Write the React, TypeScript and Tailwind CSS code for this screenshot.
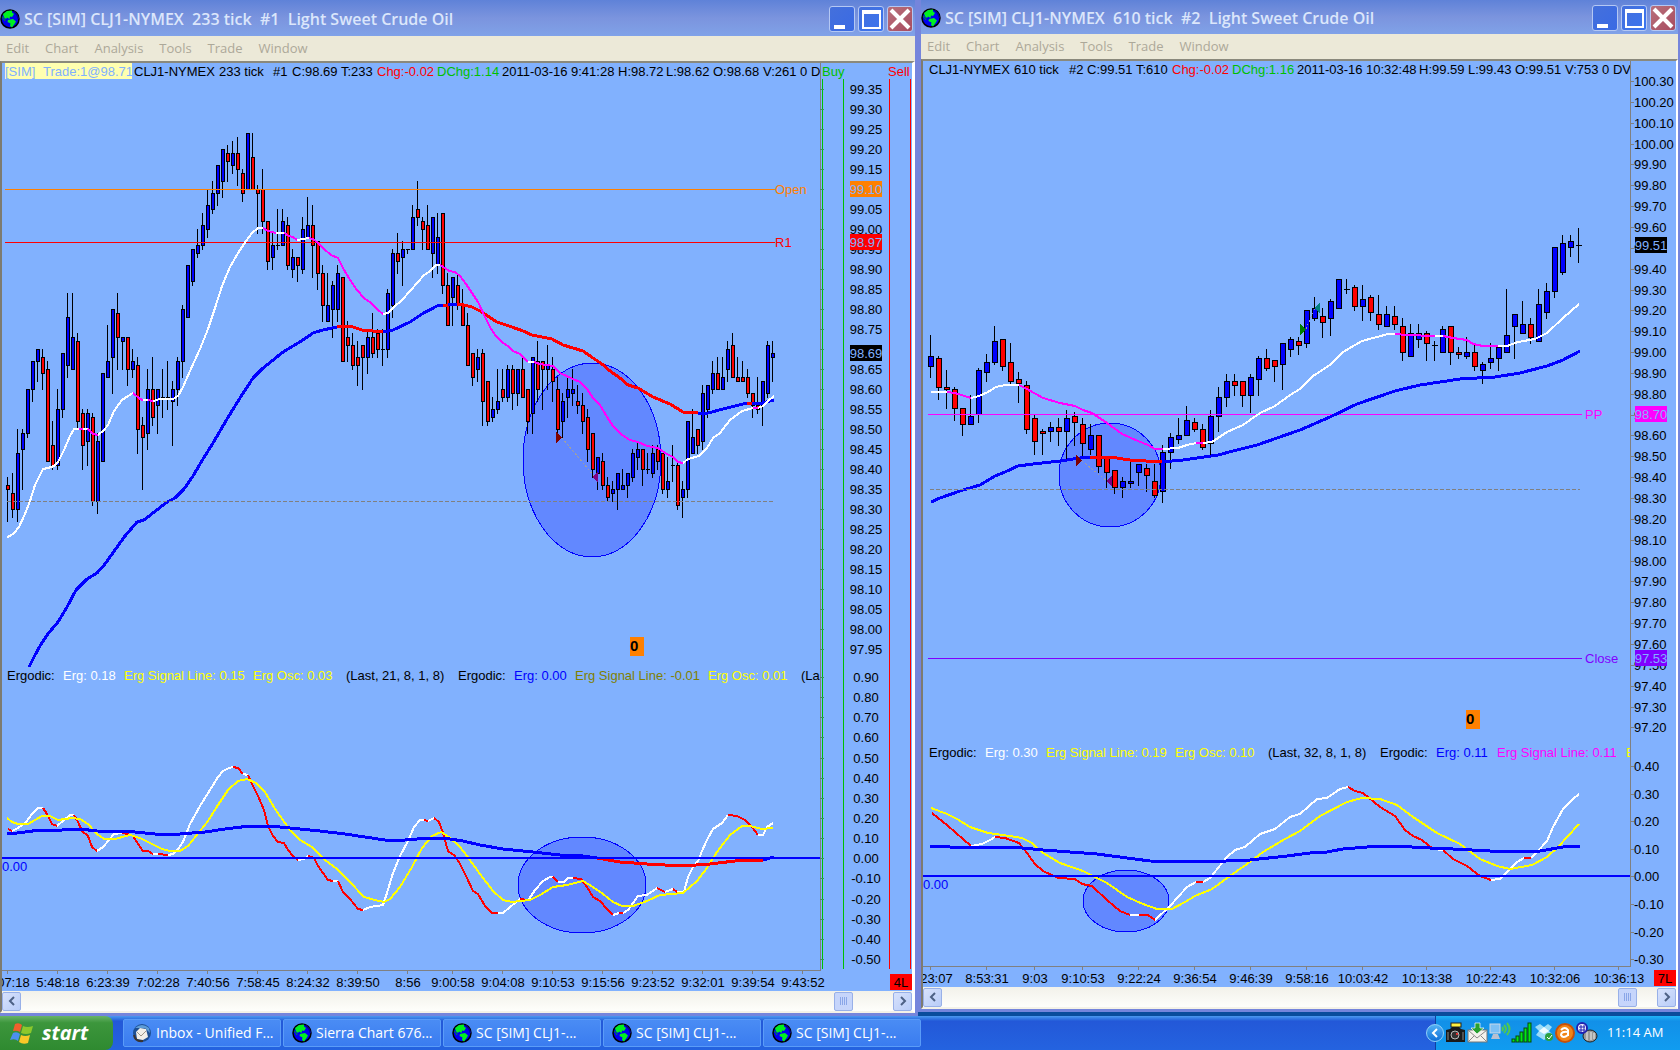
import React from 'react';

type Candle = [number, number, number, number]; // high, open, close, low (ticks above 98.00)
type Segment = [string, string]; // colour, points
type Label = [number, string, string]; // x, text, colour

interface Tag {
  y: number;
  text: string;
  color: string;
}

interface Marker {
  points: string;
  color: string;
}

interface ChartConfig {
  view: { x: number; y: number; w: number; h: number };
  plotRight: number;
  plotBottom: number;
  candleX: number;
  candleStep: number;
  bodyWidth: number;
  baseY: number;
  tickHeight: number;
  candles: Candle[];
  header: Label[];
  headerY: number;
  legend: Label[];
  legendY: number;
  levels: { y: number; color: string; label: string }[];
  tags: Tag[];
  scale: [number, string][];
  scaleX: number;
  times: [number, string][];
  dashY: number;
  dashEnd: number;
  zeroY: number;
  ellipses: [number, number, number, number][];
  averages: Segment[][];
  oscillators: Segment[][];
  zeroBox: [number, number];
  markers: Marker[];
  tradeLines: string[];
  position: [number, string];
  ladder?: boolean;
}

const BG = '#81b1fe';
const W = '#ffffff';
const M = '#ff00ff';
const B = '#0000ff';
const R = '#ff0000';
const Y = '#ffff00';
const G = '#00c000';
const K = '#000000';

const range = (from: number, to: number, step: number, y0: number, dy: number): [number, string][] => {
  const count = Math.round((from - to) / step) + 1;
  return Array.from({ length: count }, (_, i) => [Math.round(y0 + i * dy), (from - i * step).toFixed(2)]);
};

const leftCandles: Candle[] = [
  [38, 36, 35, 27], [39, 34, 30, 28], [50, 30, 44, 27], [50, 45, 49, 35], [60, 49, 60, 48], [67, 60, 67, 57],
  [70, 67, 70, 62], [70, 68, 64, 60], [67, 65, 42, 42], [52, 46, 41, 40], [60, 41, 55, 40], [69, 55, 69, 53],
  [84, 66, 78, 63], [84, 65, 73, 65], [74, 72, 52, 50], [55, 54, 46, 40], [55, 47, 54, 41], [54, 53, 32, 31],
  [49, 32, 47, 29], [64, 42, 64, 42], [76, 63, 67, 63], [80, 68, 80, 59], [84, 79, 73, 65], [73, 72, 73, 65],
  [73, 73, 65, 61], [70, 65, 67, 63], [68, 66, 50, 44], [53, 51, 48, 35], [65, 49, 60, 45], [68, 60, 53, 51],
  [60, 56, 60, 49], [65, 58, 58, 53], [67, 58, 58, 55], [62, 57, 60, 46], [68, 60, 67, 56], [81, 67, 80, 63],
  [91, 78, 91, 78], [95, 87, 95, 86], [100, 94, 96, 93], [104, 96, 101, 95], [110, 100, 106, 98], [112, 105, 109, 104],
  [116, 109, 116, 106], [120, 112, 120, 108], [121, 119, 117, 112], [122, 116, 119, 114], [123, 119, 115, 111], [115, 114, 109, 107],
  [124, 110, 124, 110], [124, 118, 110, 110], [111, 110, 109, 99], [115, 110, 102, 99], [102, 102, 92, 90], [99, 93, 96, 90],
  [105, 96, 96, 95], [105, 96, 102, 96], [103, 101, 91, 90], [95, 90, 93, 88], [93, 93, 91, 87], [103, 90, 100, 89],
  [108, 98, 101, 98], [106, 101, 96, 88], [97, 97, 89, 85], [91, 89, 81, 77], [89, 77, 81, 77], [87, 80, 86, 73],
  [91, 80, 89, 77], [88, 88, 67, 67], [77, 73, 71, 67], [74, 71, 66, 65], [72, 68, 66, 61], [71, 71, 68, 60],
  [75, 68, 73, 64], [79, 73, 69, 68], [75, 74, 70, 68], [75, 70, 70, 66], [85, 70, 84, 68], [95, 81, 94, 78],
  [99, 94, 92, 89], [97, 93, 95, 86], [95, 95, 95, 94], [106, 95, 103, 95], [112, 105, 103, 101], [103, 102, 100, 95],
  [106, 101, 95, 95], [103, 94, 103, 88], [104, 91, 98, 89], [104, 104, 86, 84], [89, 86, 76, 76], [88, 83, 88, 76],
  [89, 86, 81, 80], [85, 81, 76, 76], [79, 76, 66, 66], [69, 69, 63, 61], [70, 65, 68, 62], [70, 69, 57, 51],
  [62, 62, 52, 51], [58, 53, 55, 52], [65, 55, 57, 54], [65, 60, 58, 57], [66, 58, 65, 57], [66, 65, 59, 55],
  [65, 59, 65, 56], [68, 65, 58, 58], [60, 60, 52, 49], [68, 54, 68, 49], [72, 67, 60, 57], [67, 67, 65, 55],
  [71, 65, 66, 60], [68, 65, 62, 57], [63, 60, 50, 49], [59, 52, 57, 48], [63, 58, 60, 53], [65, 59, 60, 56],
  [61, 57, 56, 54], [59, 56, 52, 49], [55, 53, 45, 42], [49, 49, 40, 38], [43, 39, 43, 35], [44, 42, 36, 35],
  [38, 36, 33, 32], [37, 34, 35, 32], [39, 35, 39, 30], [40, 35, 36, 35], [39, 36, 39, 33], [45, 38, 44, 37],
  [47, 43, 45, 40], [45, 45, 40, 36], [44, 40, 40, 39], [46, 39, 44, 38], [46, 45, 42, 40], [44, 44, 35, 34],
  [43, 35, 37, 33], [46, 41, 41, 37], [42, 41, 31, 30], [37, 33, 35, 28], [52, 35, 52, 33], [55, 44, 48, 44],
  [50, 50, 46, 44], [61, 47, 59, 45], [61, 55, 61, 53], [67, 60, 64, 59], [68, 64, 60, 60], [68, 60, 63, 60],
  [72, 65, 70, 62], [74, 71, 63, 63], [68, 63, 62, 62], [67, 63, 62, 62], [65, 63, 59, 58], [59, 59, 56, 53],
  [63, 56, 55, 54], [62, 56, 62, 51], [72, 59, 71, 58], [72, 68, 69, 62],
];

const rightCandles: Candle[] = [
  [108, 93, 98, 88], [98, 97, 83, 77], [91, 83, 82, 73], [83, 82, 73, 67], [73, 73, 65, 60], [79, 65, 69, 65],
  [92, 70, 91, 66], [99, 90, 95, 86], [112, 95, 105, 94], [106, 106, 93, 91], [104, 95, 86, 85], [90, 87, 85, 76],
  [86, 84, 63, 61], [70, 68, 57, 51], [63, 62, 61, 51], [66, 62, 64, 57], [68, 64, 62, 55], [72, 62, 68, 49],
  [71, 69, 66, 55], [68, 65, 56, 50], [65, 53, 60, 51], [60, 60, 45, 42], [50, 49, 42, 35], [43, 43, 35, 32],
  [40, 35, 38, 30], [47, 37, 38, 35], [46, 42, 46, 36], [46, 44, 41, 33], [46, 38, 31, 30], [55, 33, 52, 28],
  [61, 52, 59, 44], [68, 58, 60, 56], [74, 60, 67, 60], [68, 66, 63, 62], [65, 63, 54, 53], [72, 56, 69, 51],
  [83, 69, 78, 62], [89, 78, 86, 74], [89, 86, 84, 79], [86, 86, 79, 74], [89, 79, 88, 71], [98, 87, 97, 79],
  [101, 97, 92, 91], [96, 96, 93, 86], [104, 94, 104, 82], [107, 101, 106, 98], [107, 105, 103, 99], [120, 104, 120, 102],
  [126, 116, 121, 115], [121, 117, 114, 107], [125, 116, 124, 108], [135, 121, 135, 121], [135, 130, 130, 128], [132, 131, 122, 120],
  [132, 122, 125, 115], [127, 126, 119, 115], [127, 118, 113, 111], [122, 112, 118, 112], [122, 117, 113, 111], [116, 112, 100, 96],
  [113, 98, 109, 98], [113, 106, 109, 102], [110, 109, 104, 96], [105, 103, 103, 96], [112, 100, 111, 100], [112, 112, 100, 94],
  [102, 100, 99, 97], [107, 98, 100, 97], [103, 100, 93, 91], [95, 91, 94, 85], [104, 95, 97, 92], [102, 97, 102, 91],
  [130, 100, 108, 100], [118, 112, 118, 97], [124, 109, 113, 109], [116, 113, 107, 104], [130, 105, 123, 105], [133, 119, 129, 116],
  [150, 129, 150, 126], [156, 138, 152, 137], [156, 150, 153, 146], [159, 151, 151, 143],
];

const leftChart: ChartConfig = {
  view: { x: 2, y: 63, w: 910, h: 928 },
  plotRight: 820,
  plotBottom: 970,
  candleX: 7,
  candleStep: 5,
  bodyWidth: 4,
  baseY: 629,
  tickHeight: 4,
  candles: leftCandles,
  headerY: 76,
  header: [
    [134, 'CLJ1-NYMEX', K], [219, '233 tick', K], [273, '#1', K], [292, 'C:98.69', K], [341, 'T:233', K],
    [377, 'Chg:-0.02', R], [437, 'DChg:1.14', G], [502, '2011-03-16', K], [571, '9:41:28', K], [618, 'H:98.72', K],
    [666, 'L:98.62', K], [713, 'O:98.68', K], [763, 'V:261 0 DV', K],
  ],
  legendY: 680,
  legend: [
    [7, 'Ergodic:', K], [63, 'Erg: 0.18', W], [124, 'Erg Signal Line: 0.15', Y], [253, 'Erg Osc: 0.03', Y],
    [346, '(Last, 21, 8, 1, 8)', K], [458, 'Ergodic:', K], [514, 'Erg: 0.00', B], [575, 'Erg Signal Line: -0.01', '#808000'],
    [708, 'Erg Osc: 0.01', Y], [801, '(Last', K],
  ],
  levels: [
    { y: 189, color: '#ff8000', label: 'Open' },
    { y: 242, color: R, label: 'R1' },
  ],
  tags: [
    { y: 189, text: '99.10', color: '#ff8000' },
    { y: 242, text: '98.97', color: R },
    { y: 353, text: '98.69', color: K },
  ],
  scale: [...range(99.35, 97.95, 0.05, 89, 20), ...range(0.9, -0.5, 0.1, 677, 20.14)],
  scaleX: 849,
  times: [
    [7, '5:07:18'], [57, '5:48:18'], [107, '6:23:39'], [157, '7:02:28'], [207, '7:40:56'], [257, '7:58:45'],
    [307, '8:24:32'], [357, '8:39:50'], [407, '8:56'], [452, '9:00:58'], [502, '9:04:08'], [552, '9:10:53'],
    [602, '9:15:56'], [652, '9:23:52'], [702, '9:32:01'], [752, '9:39:54'], [802, '9:43:52'],
  ],
  dashY: 501,
  dashEnd: 773,
  zeroY: 857,
  ellipses: [[592, 460, 69, 97], [582, 885, 64, 48]],
  averages: [
    [
      [B, '29,667 35,655 40,646 47,635 58,622 67,607 76,590 87,579 97,573 105,564 115,550 125,536 137,522 144,520 153,513 167,502 175,498 184,489 193,476 203,459 213,443 227,419 240,398 253,378 262,369 283,352 303,340 313,333 323,330 337,327'],
      [R, '350,326 362,330 383,332'],
      [B, '393,330 410,322 422,314 437,306 443,305'],
      [R, '448,305'],
      [B, '457,304'],
      [R, '460,304 472,307 480,311 497,322 512,327 523,331 532,335 552,339 563,345 583,351 593,358 602,364 610,371 620,378 628,385 638,388 653,397 670,404 683,412 698,413'],
      [B, '708,413 723,409 743,404 747,403'],
      [R, '752,403'],
      [B, '763,403 774,400'],
    ],
    [
      [W, '7,537 10,536 14,533 19,527 25,514 30,501 35,485 43,469 48,468 54,466 58,462 64,450 70,436 74,429 79,429'],
      [M, '83,429'],
      [W, '88,429'],
      [M, '93,434 98,435'],
      [W, '104,430 108,425 114,411 122,400 128,396 133,393'],
      [M, '140,399 143,400'],
      [W, '148,400'],
      [M, '153,401'],
      [W, '160,399 173,399 178,396 183,387 190,371 200,349 208,329 216,305 222,286 230,267 238,253 246,241 252,233 258,228 263,228'],
      [M, '268,231 276,233'],
      [W, '284,233'],
      [M, '289,236 293,237 297,240'],
      [W, '303,239 309,238'],
      [M, '313,239 318,243 324,249 331,255 338,258 343,268 350,280 357,290 364,298 371,303 378,310 383,314'],
      [W, '388,313 394,307 402,300 410,291 418,282 424,275 429,272 433,268 436,265 440,265'],
      [M, '445,268 449,271 455,272 460,276 466,284 472,293 478,302 485,317 490,327 495,335 503,343 508,346 513,351 520,354 528,362'],
      [W, '534,362'],
      [M, '540,364 553,366 560,373 573,379 580,382 587,389 593,398 600,405 607,417 613,426 622,435 630,440 638,442 647,446 658,448 665,453 673,457 678,462 683,463'],
      [W, '688,459 699,456 707,448 713,438 720,433 730,420 742,411 753,408'],
      [M, '758,408'],
      [W, '763,406 768,401 774,396'],
    ],
  ],
  oscillators: [
    [
      [R, '8,829 12,831'],
      [W, '18,828 26,822 32,814 38,808 43,808'],
      [R, '47,814 52,824 57,826'],
      [W, '64,820 70,815 74,815'],
      [R, '78,822 82,831 88,836 92,847 97,851'],
      [W, '103,847 109,840 114,834 122,833'],
      [R, '128,834 133,836 138,844 143,851 148,851 153,854'],
      [W, '158,854'],
      [R, '168,855'],
      [W, '173,854 178,849 183,842 190,824 200,806 210,790 218,777 223,771 229,768 233,767'],
      [R, '238,768 243,774'],
      [W, '248,775'],
      [R, '252,784 258,796 264,810 268,826 273,836 278,842 284,843 288,850 293,856 298,860'],
      [W, '304,859 308,856'],
      [R, '314,858 318,866 323,873 328,880 333,881'],
      [W, '338,881'],
      [R, '343,892 350,899 358,909 363,910'],
      [W, '370,907 383,905 387,893 393,873 400,856 408,841 414,827 420,820 424,820'],
      [R, '428,821'],
      [W, '434,818'],
      [R, '439,822 443,833 448,851 455,856 460,864 467,878 473,891 478,894 485,906 492,913 498,913'],
      [W, '503,913 510,907 520,899'],
      [R, '527,900'],
      [W, '529,899 535,890 543,881 550,877 553,877'],
      [R, '558,882'],
      [W, '564,882 568,878 573,878'],
      [R, '581,879 587,887 593,897 600,901 607,909 613,915'],
      [W, '619,913'],
      [R, '623,913'],
      [W, '628,910 638,896 647,895 657,888'],
      [R, '665,892'],
      [W, '673,889'],
      [R, '677,892'],
      [W, '684,892 688,877 693,867 698,861 702,851 707,840 713,829 722,823 728,815'],
      [R, '737,816 745,820 752,827 758,835'],
      [W, '763,835 767,827 773,823'],
    ],
    [
      [Y, '7,818 12,822 18,824 28,824 35,820 42,816 50,816 58,820 72,818 80,819 88,824 97,834 104,839 115,839 130,835 140,838 150,843 162,849 170,851 180,851 188,846 200,831 208,821 218,805 228,790 238,781 247,779 256,783 265,792 275,809 290,830 300,840 312,847 325,860 337,869 350,882 364,897 375,900 384,902 390,899 400,887 412,867 422,848 432,836 441,832 449,837 460,847 467,856 480,874 493,891 503,900 512,902 530,900 540,895 553,887 567,885 583,881 593,887 603,894 613,902 622,906 633,906 647,901 660,895 683,893 697,881 707,868 717,852 730,835 742,826 750,826 762,829 773,828'],
    ],
    [
      [B, '7,833 17,833 25,832 40,830 50,831 62,830 80,829 97,831 135,832 155,834 180,834 205,832 225,829 250,826 270,826 300,829 320,831 345,834 365,837 385,840 405,840 430,838 450,839 463,841 480,845 503,849 533,852 560,855 583,856 597,858'],
      [R, '620,862 647,864 683,866 710,864 743,860 763,860'],
      [B, '774,857'],
    ],
  ],
  zeroBox: [630, 637],
  markers: [
    { points: '556,432 556,443 562,437', color: '#800000' },
    { points: '592,477 598,472 598,483', color: '#800080' },
  ],
  tradeLines: ['562,438 594,476'],
  position: [890, '4L'],
  ladder: true,
};

const rightChart: ChartConfig = {
  view: { x: 923, y: 61, w: 753, h: 926 },
  plotRight: 1630,
  plotBottom: 966,
  candleX: 930,
  candleStep: 8,
  bodyWidth: 6,
  baseY: 560,
  tickHeight: 2.085,
  candles: rightCandles,
  headerY: 74,
  header: [
    [929, 'CLJ1-NYMEX', K], [1014, '610 tick', K], [1069, '#2', K], [1087, 'C:99.51', K], [1136, 'T:610', K],
    [1172, 'Chg:-0.02', R], [1232, 'DChg:1.16', G], [1297, '2011-03-16', K], [1366, '10:32:48', K], [1419, 'H:99.59', K],
    [1468, 'L:99.43', K], [1515, 'O:99.51', K], [1565, 'V:753 0 DV', K],
  ],
  legendY: 757,
  legend: [
    [929, 'Ergodic:', K], [985, 'Erg: 0.30', W], [1046, 'Erg Signal Line: 0.19', Y], [1175, 'Erg Osc: 0.10', Y],
    [1268, '(Last, 32, 8, 1, 8)', K], [1380, 'Ergodic:', K], [1436, 'Erg: 0.11', B], [1497, 'Erg Signal Line: 0.11', M],
    [1626, 'Erg', Y],
  ],
  levels: [
    { y: 414, color: M, label: 'PP' },
    { y: 658, color: '#8000ff', label: 'Close' },
  ],
  tags: [
    { y: 245, text: '99.51', color: K },
    { y: 414, text: '98.70', color: M },
    { y: 658, text: '97.53', color: '#8000ff' },
  ],
  scale: [...range(100.3, 97.2, 0.1, 81, 20.85), ...range(0.4, -0.3, 0.1, 766, 27.6)],
  scaleX: 1634,
  times: [
    [930, '8:23:07'], [986, '8:53:31'], [1034, '9:03'], [1082, '9:10:53'], [1138, '9:22:24'], [1194, '9:36:54'],
    [1250, '9:46:39'], [1306, '9:58:16'], [1362, '10:03:42'], [1426, '10:13:38'], [1490, '10:22:43'], [1554, '10:32:06'],
    [1618, '10:36:13'],
  ],
  dashY: 489,
  dashEnd: 1580,
  zeroY: 875,
  ellipses: [[1110, 475, 51, 52], [1126, 901, 43, 31]],
  averages: [
    [
      [B, '931,502 940,498 963,490 980,485 995,476 1005,472 1018,466 1033,464 1060,461 1080,458 1090,457'],
      [R, '1110,457 1130,460 1162,462'],
      [B, '1183,460 1218,455 1233,451 1257,445 1277,438 1300,430 1307,427 1330,417 1357,404 1395,391 1420,385 1460,379 1495,377 1520,373 1547,366 1563,360 1580,351'],
    ],
    [
      [W, '931,392 947,392'],
      [M, '955,393 971,398'],
      [W, '979,396 988,392 996,387 1005,385 1019,385'],
      [M, '1027,389 1043,398 1060,403 1075,406 1083,410 1092,413 1107,423 1122,434 1138,441 1148,445 1155,449 1163,449'],
      [W, '1178,448 1187,445 1196,443'],
      [M, '1203,443'],
      [W, '1212,442 1227,432 1243,425 1260,413 1275,406 1290,395 1300,389 1313,376 1330,365 1343,352 1362,341 1388,334 1395,334'],
      [M, '1407,335 1435,336'],
      [W, '1443,336'],
      [M, '1453,338 1467,340 1473,344 1483,346 1498,346'],
      [W, '1507,346 1518,342 1535,339 1547,333 1563,318 1579,304'],
    ],
  ],
  oscillators: [
    [
      [R, '932,813 948,826 963,839 971,846'],
      [W, '982,844 990,840 995,837'],
      [R, '1005,838 1019,843 1027,853 1035,864 1043,871 1058,878 1075,879 1082,884 1092,886 1107,900 1120,911 1130,915'],
      [W, '1139,915'],
      [R, '1148,915 1155,920'],
      [W, '1170,906 1187,887 1196,882'],
      [R, '1203,882'],
      [W, '1210,878 1218,868 1227,857 1235,850 1245,847 1260,834 1275,829 1290,817 1300,814 1317,799 1327,798 1340,789 1348,787'],
      [R, '1355,791 1363,793 1380,807 1395,816 1405,830 1413,836 1422,840 1433,849'],
      [W, '1443,850'],
      [R, '1453,859 1467,866 1480,876 1491,880'],
      [W, '1500,879 1510,869 1517,862 1524,858'],
      [R, '1531,858'],
      [W, '1538,851 1547,841 1553,827 1563,809 1573,799 1579,794'],
    ],
    [
      [Y, '931,808 947,814 957,819 970,827 988,833 1010,836 1022,838 1032,843 1043,853 1060,863 1083,871 1107,883 1127,897 1143,904 1157,909 1172,909 1185,902 1195,896 1212,889 1230,876 1247,864 1263,852 1285,839 1300,831 1320,816 1347,802 1362,798 1380,799 1397,805 1413,817 1437,833 1460,844 1480,859 1497,866 1510,869 1532,865 1547,857 1558,847 1568,836 1579,824'],
    ],
    [
      [B, '930,846 950,847 972,848 990,847 1022,848 1043,850 1097,854 1150,861 1203,862 1250,860 1287,856 1310,853 1327,852 1343,849 1367,847 1393,846 1430,848 1453,849 1490,851 1540,851 1563,847 1580,846'],
    ],
  ],
  zeroBox: [1466, 710],
  markers: [
    { points: '1076,455 1076,466 1082,461', color: '#800000' },
    { points: '1106,481 1112,476 1112,487', color: '#800080' },
    { points: '1300,324 1300,335 1306,329', color: '#008000' },
    { points: '1314,308 1320,303 1320,314', color: '#008080' },
  ],
  tradeLines: ['1082,461 1107,481', '1306,329 1315,308'],
  position: [1654, '7L'],
};

// Each segment starts where the previous one ended
const Trace: React.FC<{ segments: Segment[]; width: number }> = ({ segments, width }) => {
  let last = '';
  return (
    <g fill="none" strokeWidth={width} strokeLinejoin="round">
      {segments.map(([color, points], i) => {
        const full = `${last} ${points}`.trim();
        last = points.split(' ').pop() || '';
        return <polyline key={i} points={full} stroke={color} />;
      })}
    </g>
  );
};

const Candles: React.FC<{ chart: ChartConfig }> = ({ chart }) => {
  const toY = (tick: number) => Math.round(chart.baseY - tick * chart.tickHeight);
  return (
    <g>
      {chart.candles.map(([high, open, close, low], i) => {
        const x = chart.candleX + i * chart.candleStep;
        const left = x - chart.bodyWidth / 2 + 1;
        const top = toY(Math.max(open, close));
        const bottom = toY(Math.min(open, close));
        return (
          <g key={i}>
            <rect x={x} y={toY(high)} width={1} height={toY(low) - toY(high) + 1} fill={K} />
            <rect x={left} y={top} width={chart.bodyWidth} height={bottom - top + 1} fill={K} />
            {open !== close && (
              <rect
                x={left + 1}
                y={top + 1}
                width={chart.bodyWidth - 2}
                height={Math.max(bottom - top - 1, 1)}
                fill={close > open ? B : R}
              />
            )}
          </g>
        );
      })}
    </g>
  );
};

const Labels: React.FC<{ items: Label[]; y: number }> = ({ items, y }) => (
  <>
    {items.map(([x, text, color]) => (
      <text key={x} x={x} y={y} fill={color}>{text}</text>
    ))}
  </>
);

const Chart: React.FC<{ chart: ChartConfig; id: string }> = ({ chart, id }) => {
  const { view, plotRight, plotBottom, ladder } = chart;
  const labelX = plotRight - 45;
  return (
    <svg
      viewBox={`${view.x} ${view.y} ${view.w} ${view.h}`}
      className="block h-auto w-full bg-[#81b1fe] font-['Liberation_Sans',Arial,sans-serif] text-[13px]"
      role="img"
      aria-label="Price chart"
    >
      <clipPath id={id}>
        <rect x={view.x} y={view.y} width={plotRight - view.x} height={view.h} />
      </clipPath>

      <g shapeRendering="crispEdges">
        {chart.ellipses.map(([cx, cy, rx, ry]) => (
          <ellipse key={cx} cx={cx} cy={cy} rx={rx} ry={ry} fill="#6288ff" stroke={B} />
        ))}

        {/* plot borders and ticks */}
        <rect x={plotRight} y={view.y} width={1} height={plotBottom - view.y} fill="#808080" />
        <rect x={view.x} y={plotBottom} width={plotRight - view.x + 1} height={1} fill="#808080" />
        {chart.times.map(([x]) => (
          <rect key={x} x={x} y={plotBottom} width={1} height={4} fill="#808080" />
        ))}
        {ladder && (
          <>
            <rect x={822} y={79} width={1} height={890} fill={G} />
            <rect x={843} y={79} width={1} height={890} fill={G} />
            <rect x={889} y={79} width={1} height={890} fill={R} />
            <rect x={910} y={79} width={1} height={890} fill={R} />
          </>
        )}
        {chart.scale.map(([y]) => (
          <rect key={y} x={plotRight} y={y} width={4} height={1} fill={ladder ? '#409060' : '#808080'} />
        ))}

        <Candles chart={chart} />
        {chart.levels.map(({ y, color }) => (
          <rect key={y} x={chart.candleX - 2} y={y} width={chart.dashEnd - chart.candleX + 4} height={1} fill={color} />
        ))}
        {chart.averages.map((segments, i) => (
          <Trace key={i} segments={segments} width={i === 0 ? 3 : 2} />
        ))}
        <line
          x1={chart.candleX}
          x2={chart.dashEnd}
          y1={chart.dashY + 0.5}
          y2={chart.dashY + 0.5}
          stroke="#808080"
          strokeDasharray="4 2"
        />
        {chart.tradeLines.map((points) => (
          <polyline key={points} points={points} fill="none" stroke="#a0a0a0" strokeDasharray="2 2" />
        ))}
        {chart.markers.map(({ points, color }) => (
          <polygon key={points} points={points} fill={color} />
        ))}

        {chart.oscillators.map((segments, i) => (
          <Trace key={i} segments={segments} width={i === 2 ? 3 : 2} />
        ))}
        <rect x={view.x} y={chart.zeroY} width={plotRight - view.x} height={2} fill={B} />
      </g>

      {ladder && (
        <>
          <rect x={5} y={63} width={127} height={16} fill="#ffffb0" />
          <text x={5} y={76} fill={BG}>[SIM]</text>
          <text x={43} y={76} fill={BG}>Trade:1@98.71</text>
          <text x={822} y={76} fill={G}>Buy</text>
          <text x={888} y={76} fill={R}>Sell</text>
        </>
      )}

      <g clipPath={`url(#${id})`}>
        <Labels items={chart.header} y={chart.headerY} />
        <Labels items={chart.legend} y={chart.legendY} />
      </g>
      {chart.levels.map(({ y, color, label }) => (
        <text key={y} x={labelX} y={y + 5} fill={color}>{label}</text>
      ))}
      <text x={view.x} y={chart.zeroY + 14} fill={B}>0.00</text>

      {chart.scale.map(([y, text]) => (
        <text
          key={y}
          x={ladder ? chart.scaleX + 17 : chart.scaleX}
          y={y + 5}
          textAnchor={ladder ? 'middle' : 'start'}
          fill={K}
        >
          {text}
        </text>
      ))}
      {chart.tags.map(({ y, text, color }) => (
        <g key={y}>
          <rect x={chart.scaleX + 1} y={y - 8} width={32} height={16} fill={color} />
          <text x={chart.scaleX + 17} y={y + 5} textAnchor="middle" fill={BG}>{text}</text>
        </g>
      ))}

      {chart.times.map(([x, text]) => (
        <text key={x} x={x + 1} y={plotBottom + 17} textAnchor="middle" fill={K}>{text}</text>
      ))}
      <rect x={chart.zeroBox[0]} y={chart.zeroBox[1]} width={14} height={19} fill="#ff8000" />
      <text x={chart.zeroBox[0]} y={chart.zeroBox[1] + 14} className="text-[15px] font-bold" fill={K}>0</text>
      <rect x={chart.position[0]} y={plotBottom + 4} width={22} height={16} fill={R} />
      <text x={chart.position[0] + 11} y={plotBottom + 17} textAnchor="middle" fill={K}>{chart.position[1]}</text>
    </svg>
  );
};

const Globe: React.FC = () => (
  <svg viewBox="0 0 20 20" className="h-5 w-5 shrink-0" aria-hidden="true">
    <circle cx="10" cy="10" r="9" fill="#0000f0" stroke="#000" strokeWidth="1.5" />
    <path d="M3 5 L7 2 L12 1.5 L12 3.5 L14 5 L12 8 L10 7.5 L9.5 10 L7 8.5 L6 10 L4 8.5 Z" fill="#00f020" />
    <path d="M8 11 L13 10 L16 12.5 L14.5 15 L12 18.5 L10 17 L10.5 14.5 L7.5 13 Z" fill="#00f020" />
    <path d="M2 8 L4 10 L5 12" stroke="#00a020" fill="none" />
    <path d="M14 2.5 L17 6 L18.5 10" stroke="#000090" fill="none" strokeWidth="1.5" />
  </svg>
);

const WindowButtons: React.FC = () => {
  const base = 'flex h-[26px] w-[26px] items-center justify-center rounded-[3px] border border-[#b4c8f4]';
  return (
    <div className="ml-auto flex gap-[3px]">
      <button className={`${base} bg-linear-to-br from-[#4470dc] to-[#3a6ae4]`} aria-label="Minimize">
        <svg viewBox="0 0 24 24" className="h-6 w-6"><rect x="4" y="18" width="11" height="4" fill="#fff" /></svg>
      </button>
      <button className={`${base} bg-linear-to-br from-[#4470dc] to-[#3a74f0]`} aria-label="Maximize">
        <svg viewBox="0 0 24 24" className="h-6 w-6">
          <path d="M3 3 H22 V22 H3 Z M5 7 V20 H20 V7 Z" fill="#fff" fillRule="evenodd" />
        </svg>
      </button>
      <button className={`${base} bg-linear-to-br from-[#b8707c] to-[#a84c60]`} aria-label="Close">
        <svg viewBox="0 0 24 24" className="h-6 w-6">
          <path d="M3 3 L21 21 M21 3 L3 21" stroke="#fff" strokeWidth="4" />
        </svg>
      </button>
    </div>
  );
};

const ScrollButton: React.FC<{ direction: 'left' | 'right' }> = ({ direction }) => (
  <button
    className="flex h-[19px] w-[19px] items-center justify-center rounded-[2px] border border-[#98b0e8] bg-linear-to-br from-[#d8e2fc] to-[#b8ccf8]"
    aria-label={`Scroll ${direction}`}
  >
    <svg viewBox="0 0 10 10" className="h-[10px] w-[10px]">
      <path d={direction === 'left' ? 'M7 1 L3 5 L7 9' : 'M3 1 L7 5 L3 9'} stroke="#4d6185" strokeWidth="2" fill="none" />
    </svg>
  </button>
);

const menus = ['Edit', 'Chart', 'Analysis', 'Tools', 'Trade', 'Window'];

interface ChartWindowProps {
  title: string;
  chart: ChartConfig;
  id: string;
  titleHeight: string;
  frame: string;
  clientEdge: string;
  thumbGap: string;
}

const ChartWindow: React.FC<ChartWindowProps> = ({ title, chart, id, titleHeight, frame, clientEdge, thumbGap }) => (
  <section className={`min-w-0 self-start border-b-[3px] border-[#7585dc] bg-[#ece9d8] ${frame}`}>
    <header
      className={`flex items-center gap-1 bg-linear-to-b from-[#5f82d8] via-[#7b94de] to-[#80a2e8] pr-[2px] pt-[2px] ${titleHeight}`}
    >
      <Globe />
      <h1 className="truncate whitespace-pre font-['Open_Sans',sans-serif] text-base font-semibold text-[#dbe6fb]">{title}</h1>
      <WindowButtons />
    </header>
    <nav className="flex h-[25px] items-center gap-4 pl-[6px] font-['Open_Sans','Noto_Sans',sans-serif] text-[13px] text-[#aca899]">
      {menus.map((menu) => (
        <button key={menu}>{menu}</button>
      ))}
    </nav>
    <div className={`border-b-2 border-l-2 border-t-2 border-b-[#f4f2e8] border-l-[#7d7b70] border-r-white border-t-[#8a897c] ${clientEdge}`}>
      <Chart chart={chart} id={id} />
      <div className="flex h-5 items-center bg-linear-to-b from-[#f2f1ea] to-[#fefefb]">
        <ScrollButton direction="left" />
        <div
          className={`ml-auto flex h-[19px] w-[19px] items-center justify-center gap-px rounded-[2px] border border-[#98b0e8] bg-[#c6d5fb] ${thumbGap}`}
        >
          <span className="h-2 w-px bg-[#8aa6e8]" />
          <span className="h-2 w-px bg-[#8aa6e8]" />
          <span className="h-2 w-px bg-[#8aa6e8]" />
          <span className="h-2 w-px bg-[#8aa6e8]" />
        </div>
        <ScrollButton direction="right" />
      </div>
    </div>
  </section>
);

const Thunderbird: React.FC = () => (
  <svg viewBox="0 0 20 20" className="h-5 w-5 shrink-0" aria-hidden="true">
    <circle cx="10" cy="10" r="9" fill="#1d4f94" />
    <path d="M3 5 Q10 -1 17 5 L18 10 L13 5 Z" fill="#5d9cd8" />
    <path d="M4 9 L8 5 L14 6 L16 14 L11 17 L5 16 Z" fill="#f0eee8" />
    <path d="M5 9 L9 13 L14 8" stroke="#9a9488" fill="none" />
    <path d="M2 12 Q3 19 11 18" stroke="#3a3432" strokeWidth="2" fill="none" />
  </svg>
);

const WindowsFlag: React.FC = () => (
  <svg viewBox="0 0 24 24" className="h-6 w-6 shrink-0" aria-hidden="true">
    <path d="M5 3 Q9 1 12 4 L10 11 Q7 9 3 10 Z" fill="#f0602c" />
    <path d="M13 5 Q17 7 23 5 L21 12 Q16 14 11 12 Z" fill="#8cc82c" />
    <path d="M3 12 Q7 10 10 13 L8 20 Q5 17 0 19 Z" fill="#4c90f0" />
    <path d="M11 14 Q15 16 20 14 L18 22 Q13 24 9 21 Z" fill="#f8c828" />
  </svg>
);

const tasks = [
  { label: 'Inbox - Unified F...', icon: <Thunderbird /> },
  { label: 'Sierra Chart 676...', icon: <Globe /> },
  { label: 'SC [SIM] CLJ1-...', icon: <Globe /> },
  { label: 'SC [SIM] CLJ1-...', icon: <Globe /> },
  { label: 'SC [SIM] CLJ1-...', icon: <Globe /> },
];

const TrayIcons: React.FC = () => (
  <svg viewBox="0 0 154 22" className="h-[22px] w-[154px] shrink-0" aria-hidden="true">
    {/* camera */}
    <rect x="6" y="1" width="10" height="4" fill="#fff040" stroke="#222" />
    <path d="M1 8 L5 7 L7 5 H14 L16 7 L20 8 V20 H1 Z" fill="#1a1a1a" />
    <circle cx="10" cy="13" r="4" fill="#333" stroke="#bbb" />
    <path d="M3 10 V18 M18 10 V18" stroke="#888" />
    <rect x="11" y="11" width="2" height="2" fill="#e03030" />
    {/* mail */}
    <rect x="23" y="8" width="19" height="12" fill="#f4f2ec" stroke="#777" />
    <path d="M23 8 L32 16 L42 8 M23 20 L29 14 M42 20 L36 14" stroke="#888" fill="none" />
    <path d="M30 1 H35 V6 H39 L32 12 L26 6 H30 Z" fill="#28a030" stroke="#fff" strokeWidth="0.7" />
    {/* wireless network */}
    <rect x="45" y="2" width="10" height="9" fill="#7cc0f4" stroke="#c8d8e8" />
    <path d="M48 12 H53 L55 17 H46 Z" fill="#b8c0d0" />
    <path d="M57 5 Q59 7 57 9 M59 3 Q63 7 59 11 M62 1 Q67 7 62 13" stroke="#50c850" strokeWidth="2" fill="none" />
    {/* signal bars */}
    <g fill="#00e818" stroke="#084808">
      <rect x="67" y="17" width="3" height="3" />
      <rect x="71" y="14" width="3" height="6" />
      <rect x="75" y="10" width="3" height="10" />
      <rect x="79" y="6" width="3" height="14" />
      <rect x="83" y="1" width="3" height="19" />
    </g>
    {/* dropbox */}
    <path d="M90 5 L95 2 L99 5 L103 2 L107 5 L104 9 L107 12 L99 18 L91 13 L94 9 Z" fill="#9cdcf8" />
    <path d="M94 9 L99 5 L104 9 L99 12 Z" fill="#f0fbff" />
    <circle cx="104" cy="15" r="4" fill="#2ca040" />
    <path d="M102 15 L104 17 L107 13" stroke="#fff" fill="none" />
    {/* antivirus */}
    <circle cx="120" cy="11" r="9" fill="#f08418" stroke="#c85008" strokeWidth="2" />
    <path d="M116 8 Q120 4 123 8 V14 M123 10 Q116 9 116 13 Q118 17 123 13" stroke="#fff" strokeWidth="2" fill="none" />
    {/* clock utility */}
    <ellipse cx="145" cy="14" rx="7" ry="6" fill="#9a9a98" stroke="#222" />
    <path d="M142 10 V18 M146 10 V18 M149 11 V17" stroke="#eee" />
    <circle cx="137" cy="6" r="5" fill="#f4f4ff" stroke="#2020b0" strokeWidth="2" />
    <path d="M134 5 H140 M134 8 H140 M136 3 V10 M139 3 V10" stroke="#2020b0" />
  </svg>
);

const Taskbar: React.FC = () => (
  <footer className="flex h-[34px] items-stretch bg-linear-to-b from-[#4c98f0] from-0% via-[#2358d8] via-15% to-[#2463e0] font-['Open_Sans','Noto_Sans',sans-serif] text-[13px] text-white">
    <button className="flex w-[113px] items-center gap-2 rounded-r-lg bg-linear-to-b from-[#68b468] from-0% via-[#3c963c] via-20% to-[#2f8a30] pl-[10px]">
      <WindowsFlag />
      <span className="font-['Open_Sans',sans-serif] text-xl font-bold italic leading-6">start</span>
    </button>
    <div className="flex min-w-0 items-center gap-[2px] pl-[10px] text-sm">
      {tasks.map((task, i) => (
        <button
          key={i}
          className="flex h-7 w-[158px] items-center gap-1 rounded-[2px] border border-[#5a9cf8] bg-linear-to-b from-[#4a8cf4] to-[#3a7cf0] pl-2"
        >
          {task.icon}
          <span className="truncate">{task.label}</span>
        </button>
      ))}
    </div>
    <div className="relative ml-auto flex w-[245px] items-center border-l border-[#1040a0] bg-linear-to-b from-[#20b4f8] from-0% via-[#1290e8] via-15% to-[#109cf0] pl-[9px]">
      <button
        className="absolute -left-[10px] flex h-[18px] w-[18px] items-center justify-center rounded-full border border-[#90d0f8] bg-linear-to-b from-[#50b0f4] to-[#0c70d8]"
        aria-label="Show hidden icons"
      >
        <svg viewBox="0 0 10 10" className="h-[10px] w-[10px]">
          <path d="M7 1 L3 5 L7 9" stroke="#fff" strokeWidth="2" fill="none" />
        </svg>
      </button>
      <TrayIcons />
      <time className="ml-2 whitespace-nowrap">11:14 AM</time>
    </div>
  </footer>
);

export default function App() {
  return (
    <div className="flex min-h-screen flex-col bg-[#0a4c9c]">
      <main className="grid flex-1 grid-cols-[918fr_762fr]">
        <ChartWindow
          title="SC [SIM] CLJ1-NYMEX  233 tick  #1  Light Sweet Crude Oil"
          chart={leftChart}
          id="plot-233"
          titleHeight="h-9"
          frame="border-r-[3px]"
          clientEdge="border-r-[3px]"
          thumbGap="mr-10"
        />
        <ChartWindow
          title="SC [SIM] CLJ1-NYMEX  610 tick  #2  Light Sweet Crude Oil"
          chart={rightChart}
          id="plot-610"
          titleHeight="h-[34px]"
          frame="border-l-[3px] border-r-2"
          clientEdge="border-r-2"
          thumbGap="mr-5"
        />
      </main>
      <Taskbar />
    </div>
  );
}
